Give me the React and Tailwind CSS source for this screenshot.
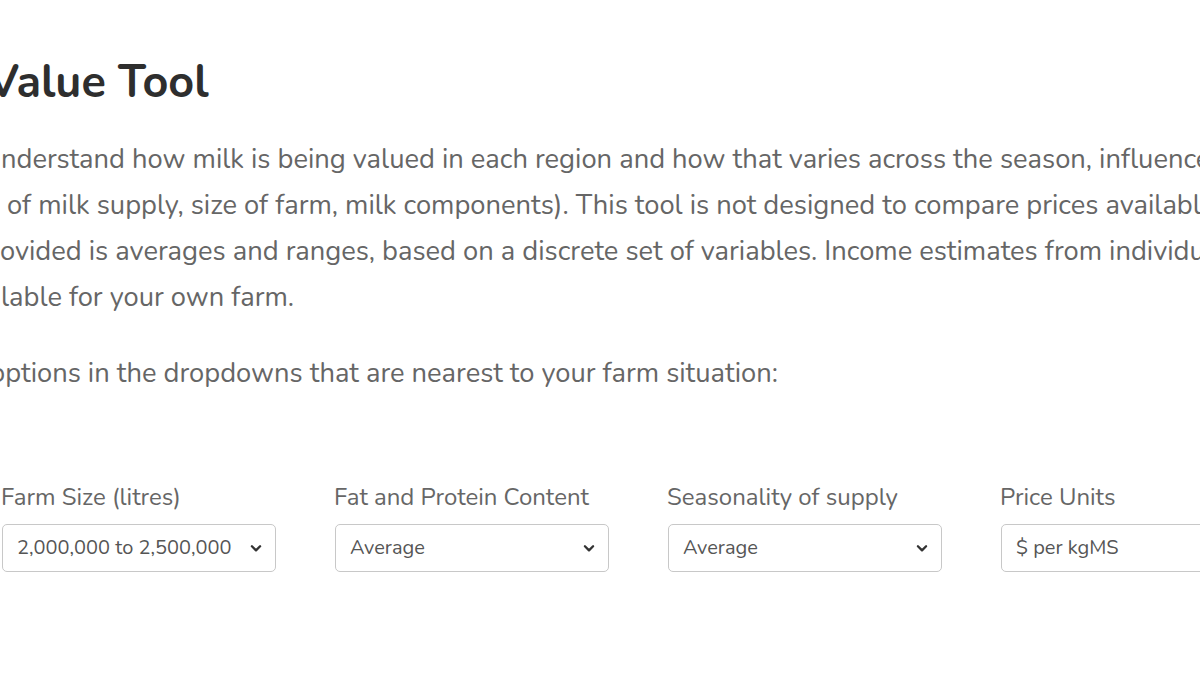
import React from 'react';

// Milk value tool intro + selector row (page is scrolled right, left edge clipped)
const fields = [
  { label: 'Farm Size (litres)', value: '2,000,000 to 2,500,000' },
  { label: 'Fat and Protein Content', value: 'Average' },
  { label: 'Seasonality of supply', value: 'Average' },
  { label: 'Price Units', value: '$ per kgMS', noArrow: true },
];

function Chevron() {
  return (
    <svg width="14" height="14" viewBox="0 0 24 24" fill="none" stroke="#333" strokeWidth="4" strokeLinecap="round" strokeLinejoin="round">
      <path d="M5 9l7 7 7-7" />
    </svg>
  );
}

export default function App() {
  return (
    <div
      className="w-[1200px] h-[675px] overflow-hidden bg-white"
      style={{ fontFamily: 'Nunito, "Open Sans", "Noto Sans", sans-serif' }}
    >
      <div className="pt-[53px]">
        {/* Title */}
        <h1 className="-ml-[13px] text-[45px] font-bold leading-[60px] text-[#2e2e2e] whitespace-nowrap">
          Value Tool
        </h1>

        {/* Intro */}
        <div className="mt-[23px] text-[27.3px] leading-[46px] text-[#666] whitespace-pre">
          <div className="ml-[1px]">nderstand how milk is being valued in each region and how that varies across the season, influenced by</div>
          <div> of milk supply, size of farm, milk components). This tool is not designed to compare prices available</div>
          <div>ovided is averages and ranges, based on a discrete set of variables. Income estimates from individual</div>
          <div className="ml-[1px]">lable for your own farm.</div>
        </div>

        <p className="mt-[30px] -ml-[10px] text-[27.3px] leading-[46px] text-[#666] whitespace-nowrap">
          options in the dropdowns that are nearest to your farm situation:
        </p>

        {/* Dropdown row */}
        <div className="mt-[86px] flex gap-[57px] whitespace-nowrap">
          {fields.map((f) => (
            <div key={f.label} className="flex flex-col shrink-0">
              <label className="ml-[1px] text-[24px] leading-[30px] text-[#666]">{f.label}</label>
              <div className="w-[274px] mt-[12px] h-[48px] ml-[2px] flex items-center justify-between rounded-[5px] border border-[#c8c8c8] pl-[14px] pr-[12px] text-[20px] text-[#555] bg-white">
                <span>{f.value}</span>
                {!f.noArrow && <Chevron />}
              </div>
            </div>
          ))}
        </div>
      </div>
    </div>
  );
}
